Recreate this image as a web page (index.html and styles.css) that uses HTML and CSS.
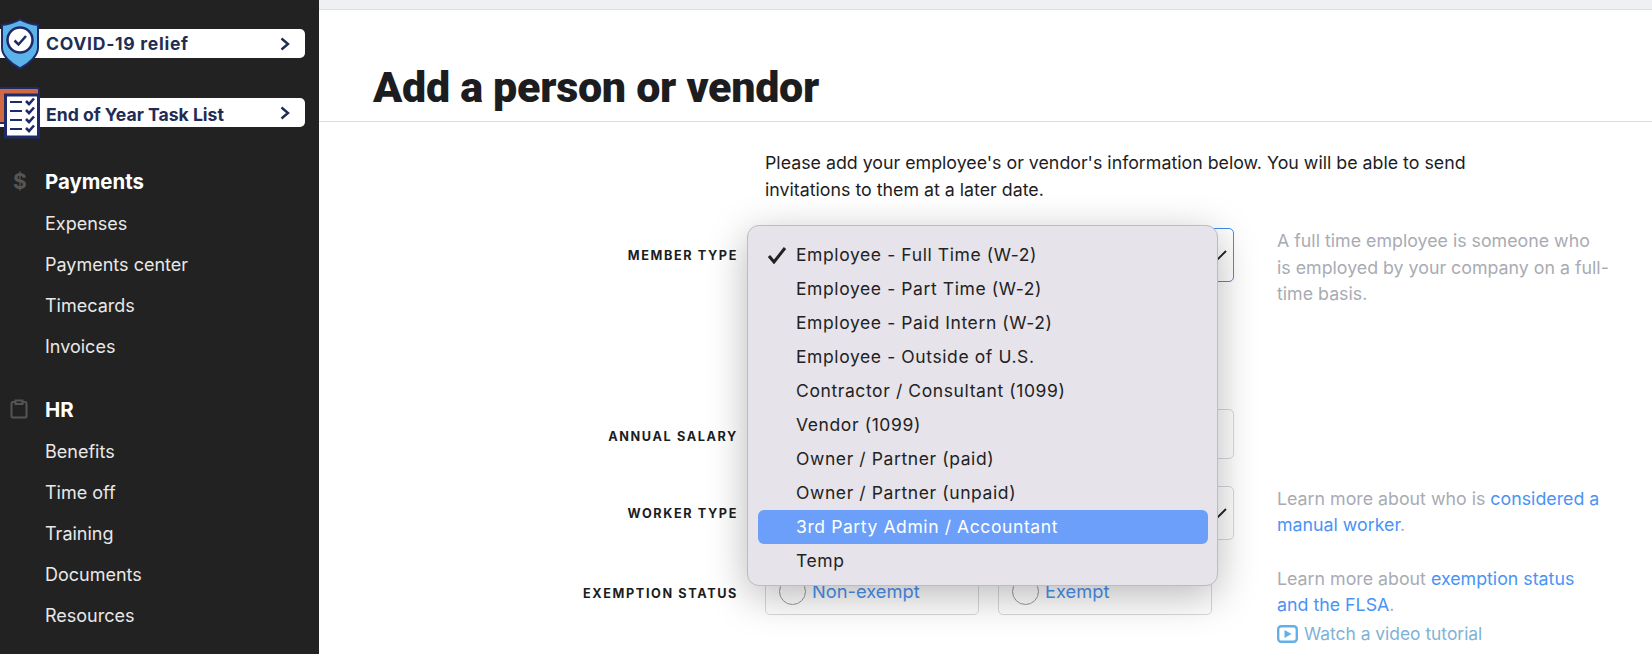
FILE: index.html
```html
<!DOCTYPE html>
<html lang="en">
<head>
    <meta charset="UTF-8">
    <title>Add a person or vendor</title>
    <link rel="stylesheet" href="styles.css">
</head>
<body>
    <aside class="sidebar">
        <a class="promo promo-covid" href="#covid">
            <svg class="promo-icon" width="40" height="52" viewBox="0 0 40 52">
                <path d="M20 1.500C26 5 31 6.500 38 7V30C38 37 30 45 20 50.500C10 45 2 37 2 30V7C9 6.500 14 5 20 1.500Z" fill="#5cb3e8" stroke="#1f2a6b" stroke-width="2"/>
                <circle cx="20" cy="22" r="12.500" fill="#fff" stroke="#1f2a6b" stroke-width="2.500"/>
                <path d="M14.500 22.500L18.500 26.500L26 18" fill="none" stroke="#1f2a6b" stroke-width="2.500"/>
            </svg>
            <span>COVID-19 relief</span>
            <svg width="12" height="14" viewBox="0 0 12 14"><path d="M2.500 1.500L9 7L2.500 12.500" fill="none" stroke="#1f2d54" stroke-width="2.400"/></svg>
        </a>
        <a class="promo promo-tasks" href="#tasks">
            <svg class="promo-icon" width="40" height="52" viewBox="0 0 40 52">
                <rect x="-6" y="1" width="45" height="35" rx="2" fill="#cf6a43" stroke="#1f2a6b" stroke-width="2"/>
                <rect x="5.500" y="8" width="33" height="42" fill="#fff" stroke="#1f2a6b" stroke-width="3"/>
                <path d="M10 15H22M10 24H22M10 33H22M10 42H22" stroke="#1f2a6b" stroke-width="2"/>
                <path d="M26 14L29 17L34 11.500M26 23L29 26L34 20.500M26 32L29 35L34 29.500M26 41L29 44L34 38.500" fill="none" stroke="#1f2a6b" stroke-width="2.600"/>
            </svg>
            <span>End of Year Task List</span>
            <svg width="12" height="14" viewBox="0 0 12 14"><path d="M2.500 1.500L9 7L2.500 12.500" fill="none" stroke="#1f2d54" stroke-width="2.400"/></svg>
        </a>

        <nav class="nav-group">
            <div class="nav-title"><span class="nav-icon nav-dollar">$</span>Payments</div>
            <a href="#expenses">Expenses</a>
            <a href="#payments">Payments center</a>
            <a href="#timecards">Timecards</a>
            <a href="#invoices">Invoices</a>
        </nav>

        <nav class="nav-group">
            <div class="nav-title">
                <span class="nav-icon">
                    <svg width="18" height="20" viewBox="0 0 18 20"><path d="M5.500 3H3C2 3 1.500 3.500 1.500 4.500V17C1.500 18 2 18.500 3 18.500H15C16 18.500 16.500 18 16.500 17V4.500C16.500 3.500 16 3 15 3H12.500M5.500 1.500H12.500V5H5.500Z" fill="none" stroke="#555" stroke-width="2"/></svg>
                </span>HR
            </div>
            <a href="#benefits">Benefits</a>
            <a href="#timeoff">Time off</a>
            <a href="#training">Training</a>
            <a href="#documents">Documents</a>
            <a href="#resources">Resources</a>
        </nav>
    </aside>

    <main class="main">
        <div class="topbar"></div>
        <header class="page-header">
            <h1>Add a person or vendor</h1>
        </header>

        <section class="form">
            <p class="intro">Please add your employee's or vendor's information below. You will be able to send invitations to them at a later date.</p>

            <div class="form-row row-member">
                <label class="form-label">Member type</label>
                <div class="field field-focus">
                    <svg class="caret" width="20" height="12" viewBox="0 0 20 12"><path d="M1 2L10 11L19 2" fill="none" stroke="#222" stroke-width="1.800"/></svg>
                </div>
                <p class="help">A full time employee is someone who<br>is employed by your company on a full-time basis.</p>
            </div>

            <div class="form-row row-salary">
                <label class="form-label">Annual salary</label>
                <div class="field field-input"></div>
            </div>

            <div class="form-row row-worker">
                <label class="form-label">Worker type</label>
                <div class="field">
                    <svg class="caret" width="20" height="12" viewBox="0 0 20 12"><path d="M1 2L10 11L19 2" fill="none" stroke="#222" stroke-width="1.800"/></svg>
                </div>
                <p class="help">Learn more about who is <a href="#manual">considered a manual worker</a>.</p>
            </div>

            <div class="form-row">
                <label class="form-label">Exemption status</label>
                <div class="radio-group">
                    <div class="radio-box"><span class="radio"></span>Non-exempt</div>
                    <div class="radio-box"><span class="radio"></span>Exempt</div>
                </div>
                <div class="help">
                    <p>Learn more about <a href="#flsa">exemption status and the FLSA</a>.</p>
                    <a class="video-link" href="#video">
                        <svg width="21" height="18" viewBox="0 0 21 18"><rect x="1.200" y="1.200" width="18.600" height="15.600" rx="3" fill="none" stroke="#62b1e6" stroke-width="2.400"/><path d="M7.500 5L14.500 9L7.500 13Z" fill="#62b1e6"/></svg>
                        Watch a video tutorial
                    </a>
                </div>
            </div>
        </section>

        <ul class="select-menu">
            <li>
                <svg class="check" width="20" height="18" viewBox="0 0 20 18"><path d="M2 10L7 16L18 2" fill="none" stroke="#222" stroke-width="3"/></svg>
                Employee - Full Time (W-2)
            </li>
            <li>Employee - Part Time (W-2)</li>
            <li>Employee - Paid Intern (W-2)</li>
            <li>Employee - Outside of U.S.</li>
            <li>Contractor / Consultant (1099)</li>
            <li>Vendor (1099)</li>
            <li>Owner / Partner (paid)</li>
            <li>Owner / Partner (unpaid)</li>
            <li class="active">3rd Party Admin / Accountant</li>
            <li>Temp</li>
        </ul>
    </main>
</body>
</html>
```

FILE: styles.css
```css
* {
    margin: 0;
    padding: 0;
    box-sizing: border-box;
}

body {
    display: flex;
    height: 100vh;
    overflow: hidden;
    font-family: 'Inter', 'Liberation Sans', sans-serif;
    color: #1d1d1f;
    background: #fff;
}

a {
    text-decoration: none;
}

/* Sidebar */
.sidebar {
    width: 319px;
    flex-shrink: 0;
    background-color: #222;
    padding-top: 29px;
}

.promo {
    position: relative;
    display: flex;
    justify-content: space-between;
    align-items: center;
    width: 305px;
    height: 29px;
    margin-bottom: 40px;
    padding: 0 14px 0 46px;
    background: #fff;
    border-radius: 0 5px 5px 0;
    color: #1f2d54;
    font-size: 17.600px;
    font-weight: 700;
}

.promo-covid span {
    letter-spacing: 0.700px;
}

.promo-tasks span {
    margin-top: 3px;
}

.promo-icon {
    position: absolute;
    left: 0;
    top: -11px;
}

.nav-group {
    margin-bottom: 20px;
}

.promo + .nav-group {
    margin-top: -8px;
}

.nav-group a,
.nav-title {
    display: flex;
    align-items: center;
    height: 41px;
    padding-left: 45px;
    color: #e8e8e8;
    font-size: 18px;
}

.nav-title {
    position: relative;
    color: #fff;
    font-size: 20.400px;
    font-weight: 700;
    height: 44px;
}

.nav-icon {
    position: absolute;
    left: 10px;
    top: 12px;
    color: #555;
    line-height: 1;
}

.nav-dollar {
    left: 13px;
    font-size: 21px;
}

/* Page header */
.main {
    position: relative;
    flex: 1;
}

.topbar {
    height: 10px;
    background: #eef0f4;
    border-bottom: 1px solid #dcdee3;
}

.page-header {
    height: 112px;
    padding: 55px 0 0 54px;
    border-bottom: 1px solid #dcdcdf;
}

.page-header h1 {
    font-family: 'Roboto', 'Liberation Sans', sans-serif;
    font-size: 43px;
    font-weight: 900;
    line-height: 44px;
    letter-spacing: -0.300px;
    color: #1d1d1f;
}

/* Form */
.intro {
    width: 720px;
    margin: 27px 0 0 446px;
    font-size: 17.800px;
    line-height: 27px;
}

.form-row {
    display: flex;
    align-items: flex-start;
}

.row-member {
    margin-top: 25px;
    margin-bottom: 101px;
}

.row-salary {
    margin-bottom: 23px;
}

.row-worker {
    margin-bottom: 26px;
}

.form-label {
    width: 419px;
    flex-shrink: 0;
    height: 54px;
    line-height: 55px;
    text-align: right;
    font-size: 12.700px;
    font-weight: 700;
    letter-spacing: 1.600px;
    text-transform: uppercase;
}

.field {
    position: relative;
    width: 469px;
    height: 54px;
    margin-left: 27px;
    flex-shrink: 0;
    border: 1px solid #d6d8dc;
    border-radius: 5px;
}

.field-focus {
    border-color: #3f8ef0;
}

.field-input {
    height: 50px;
}

.caret {
    position: absolute;
    right: 6px;
    top: 20px;
}

.radio-group {
    display: flex;
    gap: 19px;
    width: 469px;
    margin: 4px 0 0 27px;
    flex-shrink: 0;
}

.radio-box {
    display: flex;
    align-items: center;
    gap: 6px;
    width: 214px;
    height: 45px;
    padding: 0 0 2px 13px;
    border: 1px solid #d6d8dc;
    border-radius: 5px;
    color: #4a93f5;
    font-size: 18.300px;
}

.radio {
    width: 27px;
    height: 27px;
    border: 1px solid #999;
    border-radius: 50%;
}

.help {
    width: 329px;
    margin-left: 43px;
    font-size: 17.800px;
    line-height: 26.500px;
    color: #a9abb3;
}

.row-member .help {
    width: 336px;
}

.help a {
    color: #4a93f5;
}

.help .video-link {
    display: flex;
    align-items: center;
    gap: 6px;
    margin-top: 2px;
    font-size: 17.400px;
    color: #7fb2d6;
}

/* Native select menu, open over the form */
.select-menu {
    position: absolute;
    left: 428px;
    top: 225px;
    width: 471px;
    height: 361px;
    padding: 12px 9px 12px 10px;
    list-style: none;
    background: #e6e3ea;
    border: 1px solid #bdbbc0;
    border-radius: 12px;
    box-shadow: 0 10px 40px rgba(0, 0, 0, 0.28);
    font-size: 17.500px;
    letter-spacing: 0.600px;
    color: #222;
}

.select-menu li {
    position: relative;
    height: 34px;
    line-height: 34px;
    padding-left: 38px;
    border-radius: 6px;
}

.check {
    position: absolute;
    left: 9px;
    top: 8px;
}

.select-menu .active {
    background: #6b9ff9;
    color: #fff;
}
```
